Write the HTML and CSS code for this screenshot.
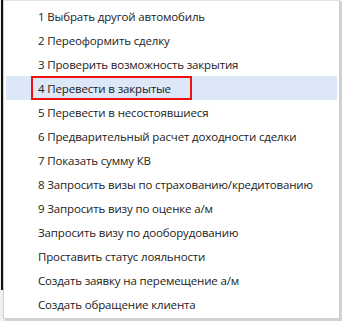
FILE: index.html
```html
<!DOCTYPE html>
<html lang="ru">
<head>
  <meta charset="UTF-8" />
  <title>Меню действий</title>
  <link rel="stylesheet" href="styles.css">
</head>
<body>
  <div class="screen">
    <div class="window-edge"></div>
    <ul class="menu">
      <li>1 Выбрать другой автомобиль</li>
      <li>2 Переоформить сделку</li>
      <li>3 Проверить возможность закрытия</li>
      <li class="active"><span class="mark">4 Перевести в закрытые</span></li>
      <li>5 Перевести в несостоявшиеся</li>
      <li>6 Предварительный расчет доходности сделки</li>
      <li>7 Показать сумму КВ</li>
      <li>8 Запросить визы по страхованию/кредитованию</li>
      <li>9 Запросить визу по оценке а/м</li>
      <li>Запросить визу по дооборудованию</li>
      <li>Проставить статус лояльности</li>
      <li>Создать заявку на перемещение а/м</li>
      <li>Создать обращение клиента</li>
    </ul>
  </div>
</body>
</html>
```

FILE: styles.css
```css
body {
  margin: 0;
  background: #f0f0f0;
  font-family: "Open Sans", "Noto Sans", sans-serif;
  font-size: 11.5px;
  letter-spacing: -0.15px;
  color: #1b1b1b;
}

.screen {
  position: relative;
  width: 342px;
  height: 321px;
}

/* edge of the window under the popup */
.window-edge {
  position: absolute;
  left: 1px;
  top: 0;
  width: 2px;
  height: 290px;
  background: #111;
}

.window-edge::after {
  content: "";
  position: absolute;
  left: 0;
  bottom: 0;
  width: 4px;
  height: 1px;
  background: #111;
}

.menu {
  position: relative;
  list-style: none;
  margin: 0 0 0 3px;
  padding: 3px 2px 2px;
  width: 331px;
  background: #fff;
  border: 1px solid #cfcfcf;
  border-top-color: #e2e2e2;
  box-shadow: 2px 2px 1px rgba(0,0,0,0.12);
}

.menu li {
  height: 24px;
  line-height: 25px;
  padding-left: 32px;
  white-space: nowrap;
}

.menu li.active {
  background: #dce7f8;
}

.mark {
  display: inline-block;
  box-sizing: border-box;
  vertical-align: top;
  margin-left: -7px;
  width: 161px;
  height: 24px;
  line-height: 21px;
  padding-left: 5px;
  border: 2px solid #ee1111;
}
```
